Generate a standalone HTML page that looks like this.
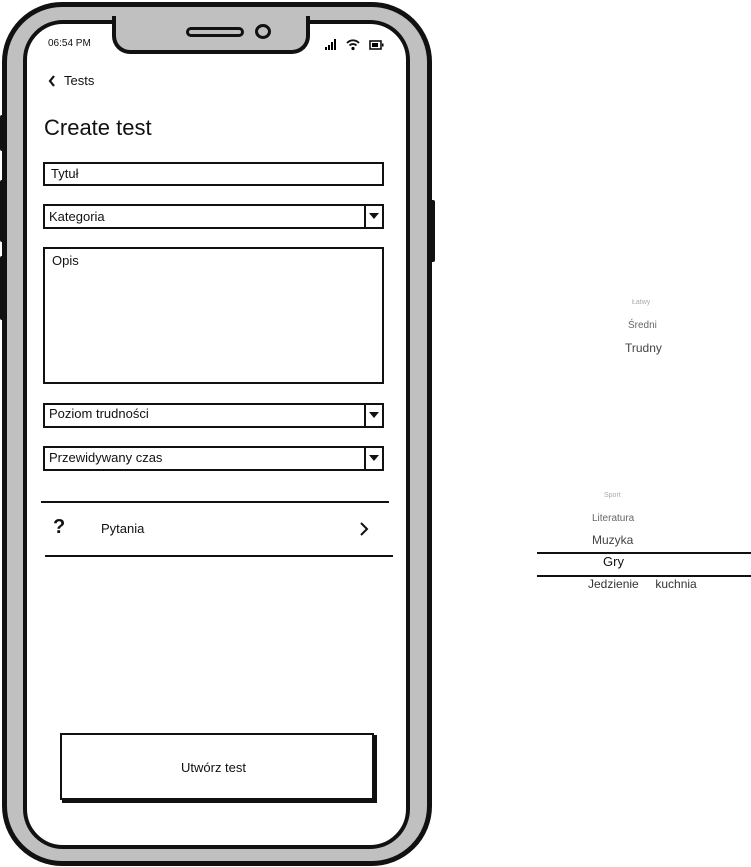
<!DOCTYPE html>
<html><head><meta charset="utf-8"><style>
*{margin:0;padding:0;box-sizing:border-box}
body{width:751px;height:867px;background:#fff;position:relative;overflow:hidden;font-family:"Liberation Sans",sans-serif;color:#111}
.a{position:absolute}
.box{position:absolute;border:2px solid #111;background:#fff}
.t{position:absolute;font-size:13px;white-space:nowrap}
.dd{position:absolute;right:0;top:0;bottom:0;width:18px;border-left:2px solid #111}
.dd:after{content:"";position:absolute;left:3px;top:7px;border-left:5px solid transparent;border-right:5px solid transparent;border-top:6px solid #111}
</style></head><body>
<div class="a" style="left:0;top:115px;width:6px;height:36px;background:#111;border-radius:2px"></div>
<div class="a" style="left:0;top:180px;width:6px;height:62px;background:#111;border-radius:2px"></div>
<div class="a" style="left:0;top:256px;width:6px;height:64px;background:#111;border-radius:2px"></div>
<div class="a" style="left:428px;top:200px;width:7px;height:62px;background:#111;border-radius:2px"></div>
<div class="a" style="left:2px;top:2px;width:430px;height:864px;background:#c0c0c0;border:5px solid #111;border-radius:60px"></div>
<div class="a" style="left:23px;top:20px;width:387px;height:829px;background:#fff;border:4px solid #111;border-radius:40px"></div>
<div class="a" style="left:112px;top:16px;width:198px;height:38px;background:#c0c0c0;border:4px solid #111;border-top:none;border-radius:0 0 18px 18px"></div>
<div class="a" style="left:186px;top:27px;width:58px;height:10px;border:3px solid #111;border-radius:6px"></div>
<div class="a" style="left:255px;top:24px;width:16px;height:15px;border:3px solid #111;border-radius:50%"></div>
<div class="t" style="left:48px;top:38px;font-size:10px">06:54 PM</div>
<svg class="a" style="left:325px;top:38px" width="60" height="14"><rect x="0" y="9" width="2" height="3"/><rect x="3" y="7" width="2" height="5"/><rect x="6" y="4" width="2" height="8"/><rect x="9" y="1" width="2" height="11"/><path d="M22 5 a8 8 0 0 1 12 0 M24.5 7.5 a5 5 0 0 1 7 0" stroke="#111" stroke-width="1.8" fill="none"/><circle cx="28" cy="10.5" r="1.6"/><rect x="45" y="3" width="11" height="8" fill="none" stroke="#111" stroke-width="1.6"/><rect x="47" y="5" width="6" height="4"/><rect x="57" y="5.5" width="1.5" height="3"/></svg>
<svg class="a" style="left:48px;top:75px" width="8" height="12"><path d="M6 1 L2 6 L6 11" stroke="#111" stroke-width="2.2" fill="none"/></svg>
<div class="t" style="left:64px;top:73px;font-size:13px">Tests</div>
<div class="t" style="left:44px;top:115px;font-size:22px">Create test</div>
<div class="box" style="left:43px;top:162px;width:341px;height:24px"><span class="t" style="left:6px;top:2px">Tytuł</span></div>
<div class="box" style="left:43px;top:204px;width:341px;height:25px"><span class="t" style="left:4px;top:3px">Kategoria</span><div class="dd"></div></div>
<div class="box" style="left:43px;top:247px;width:341px;height:137px"><span class="t" style="left:7px;top:4px">Opis</span></div>
<div class="box" style="left:43px;top:403px;width:341px;height:25px"><span class="t" style="left:4px;top:1px">Poziom trudności</span><div class="dd"></div></div>
<div class="box" style="left:43px;top:446px;width:341px;height:25px"><span class="t" style="left:4px;top:2px">Przewidywany czas</span><div class="dd"></div></div>
<div class="a" style="left:41px;top:501px;width:348px;height:2px;background:#111"></div>
<div class="a" style="left:45px;top:555px;width:348px;height:2px;background:#111"></div>
<div class="t" style="left:53px;top:516px;font-size:20px;font-weight:bold">?</div>
<div class="t" style="left:101px;top:521px">Pytania</div>
<svg class="a" style="left:358px;top:521px" width="12" height="16"><path d="M3 2 L9 8 L3 14" stroke="#111" stroke-width="2" fill="none"/></svg>
<div class="a" style="left:62px;top:735px;width:315px;height:68px;background:#111"></div>
<div class="box" style="left:60px;top:733px;width:314px;height:67px"></div>
<div class="t" style="left:181px;top:760px">Utwórz test</div>
<div class="t" style="left:632px;top:299px;font-size:7px;color:#aaa">Łatwy</div>
<div class="t" style="left:628px;top:320px;font-size:10px;color:#666">Średni</div>
<div class="t" style="left:625px;top:341px;font-size:12px;color:#444">Trudny</div>
<div class="t" style="left:604px;top:492px;font-size:7px;color:#aaa">Sport</div>
<div class="t" style="left:592px;top:513px;font-size:10px;color:#666">Literatura</div>
<div class="t" style="left:592px;top:533px;font-size:12px;color:#444">Muzyka</div>
<div class="a" style="left:537px;top:552px;width:214px;height:2px;background:#111"></div>
<div class="t" style="left:603px;top:554px;font-size:13px">Gry</div>
<div class="a" style="left:537px;top:575px;width:214px;height:2px;background:#111"></div>
<div class="t" style="left:588px;top:577px;font-size:12px;color:#333">Jedzienie &nbsp;&nbsp;&nbsp; kuchnia</div>
</body></html>
